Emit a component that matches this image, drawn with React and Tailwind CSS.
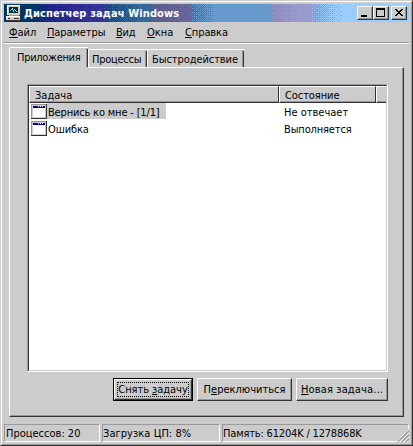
const BAYER = [
  [0, 32, 8, 40, 2, 34, 10, 42],
  [48, 16, 56, 24, 50, 18, 58, 26],
  [12, 44, 4, 36, 14, 46, 6, 38],
  [60, 28, 52, 20, 62, 30, 54, 22],
  [3, 35, 11, 43, 1, 33, 9, 41],
  [51, 19, 59, 27, 49, 17, 57, 25],
  [15, 47, 7, 39, 13, 45, 5, 37],
  [63, 31, 55, 23, 61, 29, 53, 21],
];

// each step fades in over from..to, the last one runs to the edge
const titleSteps = [
  { color: "#333399", from: 34, to: 96 },
  { color: "#336699", from: 98, to: 136 },
  { color: "#666699", from: 144, to: 182 },
  { color: "#6699cc", from: 184, to: 212 },
  { color: "#9999cc", from: 264, to: 294 },
  { color: "#99ccff", from: 307, to: 338 },
];

const ditherPath = ({ from, to }) => {
  let d = "";
  for (let x = from; x < to; x++) {
    const level = ((x - from) / (to - from)) * 64;
    for (let y = 0; y < 18; y++) {
      if (BAYER[y % 8][x % 8] < level) {
        d += `M${x} ${y}h1v1h-1z`;
      }
    }
  }
  return `${d}M${to} 0H405V18H${to}z`;
};

const TitleGradient = () => (
  <svg
    className="absolute inset-0"
    width="405"
    height="18"
    shapeRendering="crispEdges"
  >
    <rect width="405" height="18" fill="#003366" />
    {titleSteps.map((step) => (
      <path key={step.color} d={ditherPath(step)} fill={step.color} />
    ))}
  </svg>
);

const ComputerIcon = () => (
  <svg width="16" height="16" shapeRendering="crispEdges">
    <path d="M2 0h12v1h1v9h-1v1H2z" fill="#333" />
    <path d="M1 0h13v10H1z" fill="#ccc" />
    <path d="M1 0h13v1H2v9H1z" fill="#fff" />
    <path d="M3 2h9v6H3z" fill="#003333" />
    <path
      d="M4 5h1v1H4zM5 4h1v1H5zM6 3h1v2H6zM7 5h1v2H7zM8 4h1v1H8zM9 5h1v1H9zM10 6h1v1h-1z"
      fill="#99ccff"
    />
    <path d="M3 10h10v1H3z" fill="#999" />
    <path d="M1 11h14v5H1z" fill="#333" />
    <path d="M0 11h14v4H0z" fill="#ccc" />
    <path d="M0 11h14v1H1v3H0z" fill="#fff" />
    <path d="M2 13h2v1H2zM8 13h5v1H8z" fill="#333" />
  </svg>
);

const WindowIcon = () => (
  <svg width="16" height="15" shapeRendering="crispEdges">
    <path d="M0 0h16v15H0z" fill="#333" />
    <path d="M0 0h15v14H0z" fill="#999" />
    <path d="M1 1h14v13H1z" fill="#ccc" />
    <path d="M2 2h12v11H2z" fill="#fff" />
    <path d="M2 2h12v2H2z" fill="#000099" />
    <path d="M7 2h1v1H7zM9 2h1v1H9zM11 2h1v1h-1z" fill="#fff" />
  </svg>
);

const CaptionButton = ({ children }) => (
  <button className="flex w-4 h-3.5 bg-[#ccc] border border-t-white border-l-white border-r-[#333] border-b-[#333]">
    <svg
      width="14"
      height="12"
      className="border-r border-b border-[#999]"
      shapeRendering="crispEdges"
    >
      {children}
    </svg>
  </button>
);

const menuItems = [
  { hot: "Ф", rest: "айл", className: "w-[38px]" },
  { hot: "П", rest: "араметры", className: "w-[69px] tracking-[-0.1px]" },
  { hot: "В", rest: "ид", className: "w-[31px] tracking-[-0.2px]" },
  { hot: "О", rest: "кна", className: "w-[38px]" },
  { hot: "С", rest: "правка", className: "tracking-[-0.1px]" },
];

const tasks = [
  {
    name: "Вернись ко мне - [1/1]",
    status: "Не отвечает",
    nameClass: "w-[119px] bg-[#ccc] tracking-[-0.17px]",
    statusClass: "",
  },
  {
    name: "Ошибка",
    status: "Выполняется",
    nameClass: "w-[119px] tracking-[-0.1px]",
    statusClass: "tracking-[-0.15px]",
  },
];

const Tab = ({ className, children }) => (
  <div
    className={`flex justify-start border-t border-l border-white rounded-tl-[2px] ${className}`}
  >
    <span className="flex-1 flex items-center border-r border-[#999]">
      {children}
    </span>
    <span className="w-px mt-px bg-[#333]" />
  </div>
);

const HeaderCell = ({ className, children }) => (
  <div
    className={`flex items-center h-[17px] pt-px border-t border-t-white border-b border-b-[#333] shadow-[inset_0_-1px_0_#999] ${className}`}
  >
    {children}
  </div>
);

const PushButton = ({ className, children }) => (
  <button
    className={`h-[23px] border border-t-white border-l-white border-r-[#333] border-b-[#333] shadow-[inset_-1px_-1px_0_#999] whitespace-nowrap ${className}`}
  >
    {children}
  </button>
);

const StatusCell = ({ className, children }) => (
  <div
    className={`flex items-center h-[18px] border border-t-[#999] border-l-[#999] border-r-white border-b-white whitespace-nowrap ${className}`}
  >
    {children}
  </div>
);

const App = () => {
  return (
    <main className="w-[413px] h-[446px] overflow-hidden bg-[#ccc] text-black font-['DejaVu_Sans_Condensed','DejaVu_Sans',sans-serif] text-[11px] leading-[13px] border border-t-[#ccc] border-l-[#ccc] border-r-[#333] border-b-[#333] [&_u]:underline-offset-1 [&_u]:[text-decoration-skip-ink:none]">
      <div className="flex flex-col w-full h-full p-[2px] border border-t-white border-l-white border-r-[#999] border-b-[#999]">
        <header className="relative h-[18px] shrink-0">
          <TitleGradient />
          <div className="relative flex h-full items-center pl-[2px] pr-[2px]">
            <ComputerIcon />
            <h1 className="flex-1 pl-[2px] font-bold text-white tracking-[0.12px] whitespace-nowrap">
              Диспетчер задач Windows
            </h1>
            <CaptionButton>
              <path d="M3 8h6v2H3z" />
            </CaptionButton>
            <CaptionButton>
              <path d="M2 1h9v9H2zM3 3v6h7V3z" fillRule="evenodd" />
            </CaptionButton>
            <div className="w-[2px]" />
            <CaptionButton>
              <path d="M3 2h2v1h1v1h2V3h1V2h2v1h-1v1H9v1H8v1h1v1h1v1h1v1H9V8H8V7H6v1H5v1H3V8h1V7h1V6h1V5H5V4H4V3H3z" />
            </CaptionButton>
          </div>
        </header>

        <nav className="flex items-center h-5 shrink-0 pl-[5px]">
          {menuItems.map((item) => (
            <div key={item.hot} className={item.className}>
              <u>{item.hot}</u>
              {item.rest}
            </div>
          ))}
        </nav>
        <div className="h-[2px] shrink-0 border-t border-t-[#999] border-b border-b-white" />

        <section className="flex flex-col px-[5px] pt-[3px]">
          <div className="flex items-end h-5">
            <Tab className="relative z-10 w-[79px] h-[21px] -mb-px pb-px bg-[#ccc] tracking-[-0.3px] [&>span:first-child]:pl-[7px]">
              Приложения
            </Tab>
            <Tab className="w-[59px] h-[18px] tracking-[-0.25px] [&>span:first-child]:pl-[3px] [&>span:first-child]:pt-px">
              Процессы
            </Tab>
            <Tab className="w-[97px] h-[18px] tracking-[-0.08px] [&>span:first-child]:pl-1 [&>span:first-child]:pt-px">
              Быстродействие
            </Tab>
          </div>

          <div className="h-[350px] border border-t-white border-l-white border-r-[#333] border-b-[#333]">
            <div className="flex flex-col h-full border-r border-b border-[#999] pl-[17px] pt-4 pr-[14px]">
              <div className="h-[288px] border border-t-[#999] border-l-[#999] border-r-white border-b-white">
                <div className="h-full bg-white border border-t-[#333] border-l-[#333] border-r-[#ccc] border-b-[#ccc]">
                  <div className="flex bg-[#ccc]">
                    <HeaderCell className="w-[250px] pl-[5px] border-l border-l-white border-r border-r-[#333]">
                      Задача
                    </HeaderCell>
                    <HeaderCell className="w-[97px] pl-[5px] border-l border-l-white border-r border-r-[#333] tracking-[-0.08px]">
                      Состояние
                    </HeaderCell>
                    <HeaderCell className="flex-1 border-l border-l-white" />
                  </div>
                  {tasks.map((task) => (
                    <div key={task.name} className="flex items-start h-[17px]">
                      <div className="w-[18px] pl-[2px] pt-px">
                        <WindowIcon />
                      </div>
                      <div
                        className={`h-4 pt-[3px] pl-px leading-[13px] whitespace-nowrap ${task.nameClass}`}
                      >
                        {task.name}
                      </div>
                      <div
                        className={`h-4 pt-[3px] pl-[118px] leading-[13px] whitespace-nowrap ${task.statusClass}`}
                      >
                        {task.status}
                      </div>
                    </div>
                  ))}
                </div>
              </div>

              <div className="flex justify-end pt-[6px]">
                <div className="mr-1 border border-black">
                  <button className="flex w-[78px] h-[21px] p-[2px] border border-t-white border-l-white border-r-[#333] border-b-[#333] shadow-[inset_-1px_-1px_0_#999]">
                    <span className="flex-1 h-[15px] leading-[13px] tracking-[-0.05px] border border-dotted border-black whitespace-nowrap">
                      Снять <u>з</u>адачу
                    </span>
                  </button>
                </div>
                <PushButton className="w-[95px] mr-1">
                  П<u>е</u>реключиться
                </PushButton>
                <PushButton className="w-[92px] tracking-[0.13px]">
                  <u>Н</u>овая задача...
                </PushButton>
              </div>
            </div>
          </div>
        </section>

        <footer className="flex gap-[2px] mt-[7px]">
          <StatusCell className="w-24 pl-px">Процессов: 20</StatusCell>
          <StatusCell className="w-[118px] tracking-[0.05px]">
            Загрузка ЦП: 8%
          </StatusCell>
          <StatusCell className="flex-1 justify-between tracking-[-0.18px]">
            <span>Память: 61204K / 1278868K</span>
            <svg width="13" height="13" className="-mr-px mt-[5px] shrink-0">
              <rect x="12" y="0" width="1" height="13" fill="#ccc" />
              <path d="M0 13L13 0M4 13L13 4M8 13L13 8" stroke="#fff" />
              <path
                d="M1.5 13L13 1.5M5.5 13L13 5.5M9.5 13L13 9.5"
                stroke="#999"
                strokeWidth="1.4"
              />
            </svg>
          </StatusCell>
        </footer>
      </div>
    </main>
  );
};

export default App;
